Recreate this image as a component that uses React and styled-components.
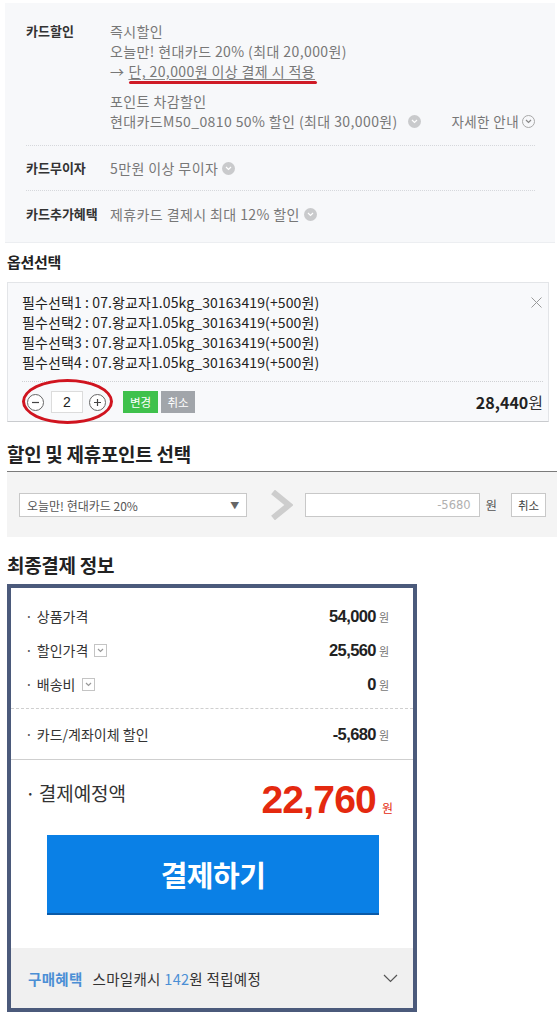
import React from 'react';
import styled, { createGlobalStyle } from 'styled-components';

const Global = createGlobalStyle`
  html, body { margin: 0; padding: 0; background: #fff; }
  body {
    width: 559px;
    font-family: "Noto Sans CJK KR", "Noto Sans", sans-serif;
    color: #333;
    -webkit-font-smoothing: antialiased;
  }
  * { box-sizing: border-box; }
`;

const Page = styled.div`
  display: flex;
  flex-direction: column;
  padding-top: 3px;
`;

/* ---------- card benefit panel ---------- */
const CardPanel = styled.section`
  margin: 0 4px 0 5px;
  background: #f7f8fa;
  padding: 0 20px 0 21px;
  border-bottom: 1px solid #eceef1;
`;

const BenefitRow = styled.div`
  display: grid;
  grid-template-columns: 84px 1fr;
  padding: ${p => p.$pad};
  border-top: ${p => (p.$first ? 'none' : '1px dotted #d6d8dc')};
  font-size: 13px;
  line-height: 20px;
`;

const BenefitLabel = styled.div`
  font-weight: 700;
  color: #333;
  font-size: 13px;
`;

const BenefitBody = styled.div`
  display: flex;
  flex-direction: column;
  color: #777;
  font-size: 14px;
  letter-spacing: 0.4px;
`;

const BenefitGroup = styled.div`
  display: flex;
  flex-direction: column;
  margin-top: ${p => p.$gap || 0}px;
`;

const Line = styled.div`
  display: flex;
  align-items: center;
  justify-content: ${p => (p.$spread ? 'space-between' : 'flex-start')};
  white-space: nowrap;
`;

const Marked = styled.span`
  position: relative;
  text-decoration: underline;
  text-decoration-color: #888;
  text-underline-offset: 2px;
  margin-left: 4px;
  &::after {
    content: '';
    position: absolute;
    left: 1px;
    right: -2px;
    bottom: -3px;
    height: 3px;
    border-radius: 2px;
    background: #cf1a26;
  }
`;

const InfoDot = styled.span`
  display: inline-flex;
  align-items: center;
  justify-content: center;
  flex: none;
  width: 13px;
  height: 13px;
  border-radius: 50%;
  background: ${p => (p.$outline ? 'transparent' : '#c9cacc')};
  border: ${p => (p.$outline ? '1px solid #a8a8a8' : 'none')};
  margin-left: ${p => p.$ml || 4}px;
  svg { display: block; }
`;

const Guide = styled.span`
  display: inline-flex;
  align-items: center;
  color: #777;
  font-size: 13.5px;
  letter-spacing: 0.4px;
`;

const Chev = ({ color = '#fff', w = 7, h = 4 }) => (
  <svg width={w} height={h + 1} viewBox="0 0 7 5">
    <path d="M1 1 L3.5 3.5 L6 1" fill="none" stroke={color} strokeWidth="1.2" />
  </svg>
);

/* ---------- section titles ---------- */
const SectionTitle = styled.h3`
  margin: ${p => p.$m};
  padding: ${p => p.$pad || '0 0 0 7px'};
  font-size: ${p => p.$size}px;
  line-height: ${p => p.$lh}px;
  font-weight: 700;
  color: #222;
  letter-spacing: -0.3px;
`;

/* ---------- option box ---------- */
const OptionBox = styled.div`
  position: relative;
  margin: 0 10px 0 7px;
  background: #f8f9fb;
  border: 1px solid #e3e5e8;
  border-bottom-color: #c9cbce;
  padding: 9px 5px 0 14px;
`;

const OptionLine = styled.div`
  font-size: 14px;
  letter-spacing: 0.1px;
  line-height: 20px;
  color: #222;
  white-space: nowrap;
`;

const CloseBtn = styled.button`
  position: absolute;
  top: 14px;
  right: 6px;
  width: 11px;
  height: 11px;
  padding: 0;
  border: 0;
  background: none;
  svg { display: block; }
`;

const QtyRow = styled.div`
  display: flex;
  align-items: center;
  justify-content: space-between;
  margin-top: 9px;
  border-top: 1px dotted #cfd1d4;
  padding: 9px 0 8px;
`;

const QtyGroup = styled.div`
  position: relative;
  display: flex;
  align-items: center;
  margin-left: 5px;
`;

const RoundBtn = styled.button`
  width: 17px;
  height: 17px;
  border-radius: 50%;
  border: 1px solid #666;
  background: #fff;
  padding: 0;
  display: flex;
  align-items: center;
  justify-content: center;
  svg { display: block; }
`;

const QtyInput = styled.div`
  width: 32px;
  height: 22px;
  margin: 0 6px 0 7px;
  border: 1px solid #dcdcdc;
  background: #fff;
  font-size: 14px;
  line-height: 20px;
  text-align: center;
  color: #222;
  font-family: "Liberation Sans", sans-serif;
`;

const RedOval = styled.span`
  position: absolute;
  left: -5px;
  top: -12px;
  width: 91px;
  height: 45px;
  border: 3px solid #d0141f;
  border-radius: 50%;
  pointer-events: none;
`;

const SmallBtn = styled.button`
  height: 22px;
  width: ${p => p.$w}px;
  margin-left: ${p => p.$ml}px;
  border: 0;
  padding: 0;
  background: ${p => p.$bg};
  color: #fff;
  font-family: "Noto Sans CJK KR", sans-serif;
  font-size: 11.5px;
  line-height: 22px;
`;

const SubTotal = styled.div`
  font-size: 16px;
  font-weight: 700;
  color: #222;
  line-height: 22px;
  span { font-weight: 400; color: #333; }
`;

/* ---------- discount select ---------- */
const DiscountHead = styled.div`
  margin: 18px 2px 0 7px;
  border-bottom: 1px solid #7b7b7b;
  padding-bottom: 3px;
`;

const DiscountPanel = styled.div`
  margin: 0 2px 0 7px;
  background: #f4f4f4;
  padding: 21px 11px 20px 12px;
  display: flex;
  align-items: center;
`;

const SelectBox = styled.div`
  width: 229px;
  height: 24px;
  background: #fff;
  border: 1px solid #c8c8c8;
  display: flex;
  align-items: center;
  justify-content: space-between;
  padding: 0 7px 0 7px;
  font-size: 12px;
  color: #555;
  span { font-size: 9px; color: #666; }
`;

const ArrowWrap = styled.div`
  margin: -3px 12px -3px 23px;
  svg { display: block; }
`;

const AmountInput = styled.div`
  width: 175px;
  height: 24px;
  background: #fff;
  border: 1px solid #c8c8c8;
  text-align: right;
  padding-right: 8px;
  font-family: "DejaVu Sans", sans-serif;
  font-size: 11.5px;
  line-height: 22px;
  color: #b0b0b0;
`;

const Unit = styled.span`
  margin: 0 14px 0 6px;
  font-size: 12.5px;
  line-height: 20px;
  color: #555;
`;

const PlainBtn = styled.button`
  width: 35px;
  height: 24px;
  border: 1px solid #c8c8c8;
  background: #fff;
  padding: 0;
  font-family: "Noto Sans CJK KR", sans-serif;
  font-size: 11.5px;
  color: #444;
`;

/* ---------- final payment ---------- */
const FinalBox = styled.div`
  margin-left: 7px;
  width: 410px;
  border: 4px solid #4b5a7b;
  background: #fff;
  display: flex;
  flex-direction: column;
`;

const PriceGroup = styled.div`
  padding: ${p => p.$pad};
  border-bottom: 1px ${p => p.$line} #cfcfcf;
`;

const PriceRow = styled.div`
  display: flex;
  align-items: center;
  justify-content: space-between;
  height: 34px;
`;

const PriceLabel = styled.div`
  display: flex;
  align-items: center;
  font-size: 14px;
  color: #333;
  &::before {
    content: '·';
    margin-right: 4px;
    color: #555;
  }
`;

const ToggleBox = styled.span`
  display: inline-flex;
  align-items: center;
  justify-content: center;
  width: 13px;
  height: 13px;
  border: 1px solid #c4c4c4;
  margin-left: 6px;
  background: #fff;
  svg { display: block; }
`;

const PriceValue = styled.div`
  display: flex;
  align-items: baseline;
  font-family: "Liberation Sans", sans-serif;
  font-weight: 700;
  font-size: 16.5px;
  line-height: 20px;
  letter-spacing: -0.6px;
  color: #222;
  span {
    font-family: "Noto Sans CJK KR", sans-serif;
    font-weight: 400;
    font-size: 11px;
    line-height: 1;
    letter-spacing: 0;
    color: #777;
    margin-left: 3px;
  }
`;

const TotalRow = styled.div`
  display: flex;
  align-items: flex-start;
  justify-content: space-between;
  padding: 19px 20px 0 14px;
  height: 60px;
`;

const TotalLabel = styled.div`
  font-size: 19px;
  line-height: 28px;
  color: #333;
  &::before {
    content: '·';
    margin-right: 3px;
  }
`;

const TotalValue = styled.div`
  display: flex;
  align-items: baseline;
  margin-top: 1px;
  font-family: "Liberation Sans", sans-serif;
  font-weight: 700;
  font-size: 39px;
  line-height: 40px;
  letter-spacing: -0.8px;
  color: #e4290f;
  span {
    font-family: "Noto Sans CJK KR", sans-serif;
    font-weight: 400;
    font-size: 12px;
    line-height: 1;
    letter-spacing: 0;
    margin-left: 6px;
  }
`;

const PayButton = styled.button`
  margin: 15px 0 0 36px;
  width: 332px;
  height: 80px;
  border: 0;
  border-bottom: 2px solid #0a5aa8;
  background: #0a80e6;
  color: #fff;
  font-family: "Noto Sans CJK KR", sans-serif;
  font-size: 29px;
  font-weight: 700;
  letter-spacing: -0.5px;
  padding: 0;
`;

const BenefitBar = styled.div`
  margin-top: 33px;
  height: 60px;
  background: #f0f0f0;
  display: flex;
  align-items: center;
  justify-content: space-between;
  padding: 0 15px 0 17px;
  font-size: 14.5px;
  letter-spacing: 0.3px;
  color: #333;
  svg { display: block; }
`;

const BarText = styled.div`
  display: flex;
  align-items: center;
  white-space: nowrap;
`;

const Blue = styled.span`
  color: #4b8fd5;
  font-weight: ${p => (p.$bold ? 700 : 400)};
  margin-right: ${p => p.$mr || 0}px;
`;

const Minus = () => (
  <svg width="9" height="9" viewBox="0 0 9 9">
    <path d="M1 4.5 H8" stroke="#444" strokeWidth="1.2" />
  </svg>
);
const Plus = () => (
  <svg width="9" height="9" viewBox="0 0 9 9">
    <path d="M1 4.5 H8 M4.5 1 V8" stroke="#444" strokeWidth="1.2" />
  </svg>
);

export default function App() {
  return (
    <Page>
      <Global />
      <CardPanel>
        <BenefitRow $first $pad="18px 0 14px">
          <BenefitLabel>카드할인</BenefitLabel>
          <BenefitBody>
            <BenefitGroup>
              <Line>즉시할인</Line>
              <Line>오늘만! 현대카드 20% (최대 20,000원)</Line>
              <Line>→<Marked>단, 20,000원 이상 결제 시 적용</Marked></Line>
            </BenefitGroup>
            <BenefitGroup $gap={10}>
              <Line>포인트 차감할인</Line>
              <Line $spread>
                <Line>
                  현대카드M50_0810 50% 할인 (최대 30,000원)
                  <InfoDot $ml={10}><Chev /></InfoDot>
                </Line>
                <Guide>
                  자세한 안내
                  <InfoDot $outline $ml={3}><Chev color="#888" /></InfoDot>
                </Guide>
              </Line>
            </BenefitGroup>
          </BenefitBody>
        </BenefitRow>
        <BenefitRow $pad="12px 0 12px">
          <BenefitLabel>카드무이자</BenefitLabel>
          <BenefitBody>
            <Line>5만원 이상 무이자<InfoDot><Chev /></InfoDot></Line>
          </BenefitBody>
        </BenefitRow>
        <BenefitRow $pad="13px 0 18px">
          <BenefitLabel>카드추가혜택</BenefitLabel>
          <BenefitBody>
            <Line>제휴카드 결제시 최대 12% 할인<InfoDot><Chev /></InfoDot></Line>
          </BenefitBody>
        </BenefitRow>
      </CardPanel>

      <SectionTitle $size={15} $lh={20} $m="9px 0 10px">옵션선택</SectionTitle>
      <OptionBox>
        <CloseBtn aria-label="삭제">
          <svg width="11" height="11" viewBox="0 0 11 11">
            <path d="M0.5 0.5 L10.5 10.5 M10.5 0.5 L0.5 10.5" stroke="#9a9a9a" strokeWidth="1" />
          </svg>
        </CloseBtn>
        {[1, 2, 3, 4].map(n => (
          <OptionLine key={n}>필수선택{n} : 07.왕교자1.05kg_30163419(+500원)</OptionLine>
        ))}
        <QtyRow>
          <Line>
            <QtyGroup>
              <RoundBtn aria-label="minus"><Minus /></RoundBtn>
              <QtyInput>2</QtyInput>
              <RoundBtn aria-label="plus"><Plus /></RoundBtn>
              <RedOval />
            </QtyGroup>
            <SmallBtn $w={35} $ml={17} $bg="#3fc14c">변경</SmallBtn>
            <SmallBtn $w={34} $ml={3} $bg="#a1a5aa">취소</SmallBtn>
          </Line>
          <SubTotal>28,440<span>원</span></SubTotal>
        </QtyRow>
      </OptionBox>

      <DiscountHead>
        <SectionTitle $size={19} $lh={28} $m="0" $pad="0">할인 및 제휴포인트 선택</SectionTitle>
      </DiscountHead>
      <DiscountPanel>
        <SelectBox>오늘만! 현대카드 20%<span>▼</span></SelectBox>
        <ArrowWrap>
          <svg width="23" height="30" viewBox="0 0 23 30">
            <path d="M3 2 L19 15 L3 28" fill="none" stroke="#cdcdcd" strokeWidth="6" />
          </svg>
        </ArrowWrap>
        <AmountInput>-5680</AmountInput>
        <Unit>원</Unit>
        <PlainBtn>취소</PlainBtn>
      </DiscountPanel>

      <SectionTitle $size={19} $lh={28} $m="14px 0 5px">최종결제 정보</SectionTitle>
      <FinalBox>
        <PriceGroup $pad="11px 24px 7px 14px" $line="dashed">
          <PriceRow>
            <PriceLabel>상품가격</PriceLabel>
            <PriceValue>54,000<span>원</span></PriceValue>
          </PriceRow>
          <PriceRow>
            <PriceLabel>할인가격<ToggleBox><Chev color="#999" /></ToggleBox></PriceLabel>
            <PriceValue>25,560<span>원</span></PriceValue>
          </PriceRow>
          <PriceRow>
            <PriceLabel>배송비<ToggleBox><Chev color="#999" /></ToggleBox></PriceLabel>
            <PriceValue>0<span>원</span></PriceValue>
          </PriceRow>
        </PriceGroup>
        <PriceGroup $pad="8px 24px 8px 14px" $line="solid">
          <PriceRow>
            <PriceLabel>카드/계좌이체 할인</PriceLabel>
            <PriceValue>-5,680<span>원</span></PriceValue>
          </PriceRow>
        </PriceGroup>
        <TotalRow>
          <TotalLabel>결제예정액</TotalLabel>
          <TotalValue>22,760<span>원</span></TotalValue>
        </TotalRow>
        <PayButton>결제하기</PayButton>
        <BenefitBar>
          <BarText>
            <Blue $bold $mr={10}>구매혜택</Blue>
            스마일캐시&nbsp;<Blue>142</Blue>원 적립예정
          </BarText>
          <svg width="15" height="9" viewBox="0 0 15 9">
            <path d="M1 1 L7.5 7.5 L14 1" fill="none" stroke="#555" strokeWidth="1.2" />
          </svg>
        </BenefitBar>
      </FinalBox>
    </Page>
  );
}
